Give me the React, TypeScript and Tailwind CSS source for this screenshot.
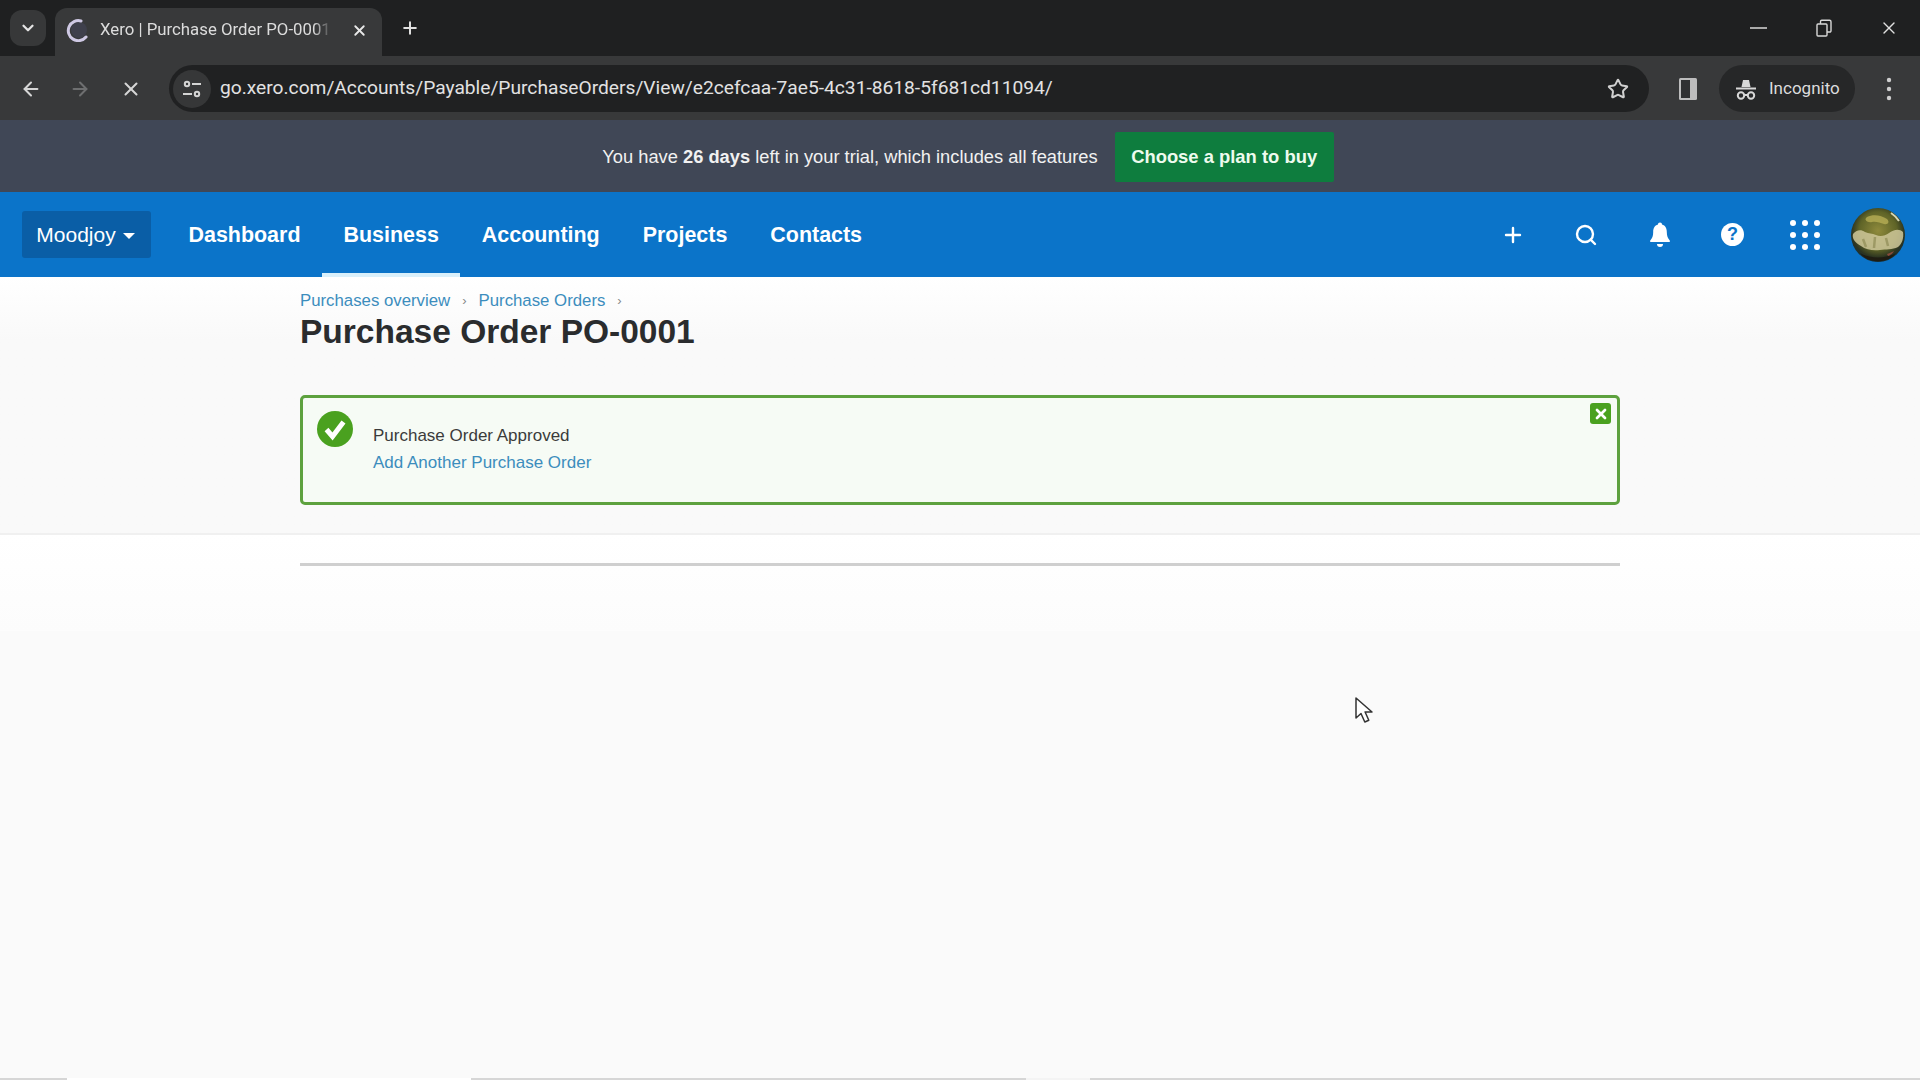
import { ArrowLeft, ArrowRight, ChevronDown, Plus, Search, Star, X } from 'lucide-react';

const navItems = ['Dashboard', 'Business', 'Accounting', 'Projects', 'Contacts'];

const sans = 'font-["Liberation_Sans",Arial,sans-serif]';

function TuneIcon() {
  return (
    <svg width="22" height="22" viewBox="0 0 22 22" fill="none" stroke="#d4d4d4" strokeWidth="2">
      <circle cx="6" cy="6" r="2.2" />
      <path d="M11 6h9M2 16h9" />
      <circle cx="16" cy="16" r="2.2" />
    </svg>
  );
}

function RestoreIcon() {
  return (
    <svg width="16" height="18" viewBox="0 0 16 18" fill="none" stroke="#d8d8d8" strokeWidth="1.4">
      <rect x="1" y="5" width="10" height="12" rx="1" />
      <path d="M4.5 5V2.5a1.2 1.2 0 0 1 1.2-1.2h7.8A1.5 1.5 0 0 1 15 2.8v9a1.2 1.2 0 0 1-1.2 1.2H11" />
    </svg>
  );
}

function SidePanelIcon() {
  return (
    <svg width="20" height="24" viewBox="0 0 20 24">
      <rect x="1" y="1" width="18" height="22" rx="1.5" fill="#bdbdbd" />
      <rect x="3" y="3" width="9" height="18" fill="#303132" />
    </svg>
  );
}

function IncognitoIcon() {
  return (
    <svg width="22" height="24" viewBox="0 0 22 24" fill="none" stroke="#d8d8d8" strokeWidth="2">
      <path d="M6.5 10 8 3h6l1.5 7" fill="#d8d8d8" stroke="none" />
      <path d="M1 11.5h20" />
      <circle cx="6" cy="18.5" r="3.2" />
      <circle cx="16" cy="18.5" r="3.2" />
      <path d="M9 18h4" />
    </svg>
  );
}

function BellIcon() {
  return (
    <svg width="20" height="26" viewBox="0 0 20 26" fill="#fff">
      <path d="M10 0.5c1.3 0 2 .9 2 2.1 3.4 1 4.8 3.9 4.8 7.4 0 3.900 1 6.300 3 8.500v1.500H.2V18.500c2-2.200 3-4.600 3-8.500 0-3.500 1.400-6.400 4.800-7.400 0-1.200.7-2.100 2-2.100z" />
      <path d="M7 22h6a3 3 0 0 1-6 0z" />
    </svg>
  );
}

function GridIcon() {
  return (
    <svg width="30" height="30" viewBox="0 0 30 30" fill="#fff">
      {[3, 15, 27].map(y =>
        [3, 15, 27].map(x => <circle key={`${x}-${y}`} cx={x} cy={y} r="3" />)
      )}
    </svg>
  );
}

function Avatar() {
  return (
    <svg width="54" height="54" viewBox="0 0 54 54" className="shrink-0">
      <defs>
        <radialGradient id="globe" cx="50%" cy="42%" r="58%">
          <stop offset="0%" stopColor="#8f8a3c" />
          <stop offset="60%" stopColor="#5f6427" />
          <stop offset="85%" stopColor="#2c3420" />
          <stop offset="100%" stopColor="#16303a" />
        </radialGradient>
      </defs>
      <circle cx="27" cy="27" r="27" fill="url(#globe)" />
      <path d="M2 26c3-4 8-5 12-2 4 2 7 1 11 3s9 1 13-2 10-5 14-1c1 6-1 12-5 15-6 3-12 2-18 3s-14 0-19-4C3 34 1 30 2 26z" fill="#cfc89a" opacity=".85" />
      <path d="M12 31l3 8M24 29l-1 11M35 30l2 8" stroke="#8f8b55" strokeWidth="2.5" fill="none" opacity=".7" />
      <path d="M16 9c6-3 14-2 20 2 3 3 1 6-3 5s-8-3-12-2-9-2-5-5z" fill="#b6ae55" opacity=".8" />
      <path d="M9 45c10 6 26 6 36 0-8 11-28 11-36 0z" fill="#1f1c12" />
      <path d="M36 46c3-1 5-2 7-3-1 2-3 4-6 5z" fill="#8a4a3a" />
      <path d="M40 5a27 27 0 0 1 8 8" stroke="#d5d6b4" strokeWidth="2" fill="none" />
    </svg>
  );
}

function Cursor() {
  return (
    <svg width="18" height="28" viewBox="0 0 18 28" className="absolute left-[1355px] top-[697px]">
      <path d="M1 1v20l5-4.500 3.800 8.500 4-1.800-3.700-8.200H17z" fill="#fff" stroke="#333" strokeWidth="1.500" strokeLinejoin="round" />
    </svg>
  );
}

export default function App() {
  return (
    <div className={`relative flex h-[1080px] w-[1920px] flex-col overflow-hidden bg-[#fafafa] ${sans}`}>
      {/* Browser tab strip */}
      <div className="flex h-[56px] shrink-0 items-end bg-[#1f2021] font-['Roboto',sans-serif]">
        <div className="mb-[10px] ml-[10px] flex h-[36px] w-[36px] items-center justify-center rounded-xl bg-[#373839]">
          <ChevronDown className="h-[18px] w-[18px] text-[#e4e4e4]" strokeWidth={3} />
        </div>
        <div className="ml-[9px] flex h-[48px] w-[327px] items-center rounded-t-xl bg-[#38393a] pb-[4px] pl-[11px] pr-[14px]">
          <svg width="24" height="24" viewBox="0 0 24 24" fill="none" className="shrink-0">
            <circle cx="13" cy="12" r="8" fill="#3f404c" />
            <path d="M15 3a10 10 0 1 0 5 16" stroke="#cfc9e4" strokeWidth="3" strokeLinecap="round" />
          </svg>
          <span className="ml-[10px] w-[232px] overflow-hidden whitespace-nowrap text-[16.8px] text-[#dcdcdc] [mask-image:linear-gradient(to_right,black_92%,transparent)]">Xero | Purchase Order PO-0001</span>
          <X className="ml-auto h-[17px] w-[17px] text-[#e8e8e8]" strokeWidth={2.6} />
        </div>
        <Plus className="mb-[18px] ml-[18px] h-[20px] w-[20px] text-[#e0e0e0]" strokeWidth={2.4} />
        <div className="mb-[18px] ml-auto flex items-center gap-[47px] pr-[21px]">
          <svg width="17" height="2" viewBox="0 0 17 2" className="mr-[2px]"><path d="M0 1h17" stroke="#cfcfcf" strokeWidth="1.6" /></svg>
          <RestoreIcon />
          <X className="h-[20px] w-[20px] text-[#e0e0e0]" strokeWidth={1.6} />
        </div>
      </div>

      {/* Browser toolbar */}
      <div className="flex h-[64px] shrink-0 items-center bg-[#38393a] pt-[1px] font-['Roboto',sans-serif]">
        <ArrowLeft className="ml-[20px] h-[22px] w-[22px] text-[#d6d6d6]" strokeWidth={2.2} />
        <ArrowRight className="ml-[27px] h-[22px] w-[22px] text-[#6e6f70]" strokeWidth={2.2} />
        <X className="ml-[29px] h-[22px] w-[22px] text-[#d6d6d6]" strokeWidth={2.2} />
        <div className="ml-[27px] flex h-[47px] w-[1480px] items-center rounded-full bg-[#202122]">
          <div className="ml-[4px] flex h-[38px] w-[38px] items-center justify-center rounded-full bg-[#363738]">
            <TuneIcon />
          </div>
          <span className="ml-[9px] whitespace-nowrap text-[19.2px] text-[#e2e2e2]">go.xero.com/Accounts/Payable/PurchaseOrders/View/e2cefcaa-7ae5-4c31-8618-5f681cd11094/</span>
          <Star className="ml-auto mr-[20px] h-[22px] w-[22px] text-[#d0d0d0]" strokeWidth={2.2} />
        </div>
        <div className="ml-[29px]"><SidePanelIcon /></div>
        <div className="ml-[21px] flex h-[47px] w-[136px] items-center rounded-full bg-[#262728] pl-[16px]">
          <IncognitoIcon />
          <span className="ml-[12px] text-[17px] text-[#dcdcdc]">Incognito</span>
        </div>
        <svg width="6" height="24" viewBox="0 0 6 24" fill="#cfcfcf" className="ml-[31px]">
          <circle cx="3" cy="3" r="2.2" />
          <circle cx="3" cy="12" r="2.2" />
          <circle cx="3" cy="21" r="2.2" />
        </svg>
      </div>

      {/* Trial banner */}
      <div className="flex h-[72px] shrink-0 items-center justify-center bg-[#404756] pl-[16px] pt-[2px] text-[#f1f1f1]">
        <span className="text-[18.3px]">You have <b>26 days</b> left in your trial, which includes all features</span>
        <div className="ml-[17px] flex h-[50px] w-[219px] items-center justify-center rounded-[2px] bg-[#0e7d3e] text-[18.4px] font-bold text-[#eefbee]">Choose a plan to buy</div>
      </div>

      {/* Xero nav */}
      <div className="flex h-[85px] shrink-0 items-center bg-[#0b74c9] pl-[22px] pr-[15px] text-white">
        <div className="flex h-[47px] w-[129px] items-center justify-center gap-[7px] rounded-[3px] bg-[#0a5ea6] pr-[2px] text-[21px]">
          Moodjoy
          <span className="mt-[2px] h-0 w-0 border-x-[6px] border-t-[6px] border-x-transparent border-t-white" />
        </div>
        <div className="ml-[16px] flex h-full items-stretch">
          {navItems.map(item => (
            <div
              key={item}
              className={`flex items-center border-b-[4px] px-[21.5px] pt-[5px] text-[21.45px] font-bold ${item === 'Business' ? 'border-[#d9f0fb]' : 'border-transparent'}`}
            >
              {item}
            </div>
          ))}
        </div>
        <div className="ml-auto flex items-center">
          <Plus className="h-[24px] w-[24px]" strokeWidth={2.4} />
          <Search className="ml-[49px] h-[24px] w-[24px]" strokeWidth={2.4} />
          <div className="ml-[52px]"><BellIcon /></div>
          <div className="ml-[51px] flex h-[23px] w-[23px] items-center justify-center rounded-full bg-white text-[18px] font-bold text-[#0b74c9]">?</div>
          <div className="ml-[46px]"><GridIcon /></div>
          <div className="ml-[31px]"><Avatar /></div>
        </div>
      </div>

      {/* Page */}
      <main className="flex-1">
        <div className="border-b-2 border-[#f0f0f0] bg-gradient-to-b from-white to-[#f9f9f9] to-[25%] pb-[28px] pl-[300px] pr-[300px] pt-[12px]">
          <div className="flex items-center text-[16.8px] leading-[24px] text-[#3c8dbd]">
            Purchases overview
            <span className="mx-[12px] text-[13px] text-[#888]">›</span>
            Purchase Orders
            <span className="mx-[12px] text-[13px] text-[#888]">›</span>
          </div>
          <h1 className="text-[33.5px] font-bold leading-[38px] text-[#2a2c2e]">Purchase Order PO-0001</h1>
          <div className="relative mt-[44px] flex h-[110px] rounded-[5px] border-[3px] border-[#5da13e] bg-[#f6fbf5] pl-[14px] pt-[13px]">
            <svg width="36" height="36" viewBox="0 0 36 36" className="shrink-0">
              <circle cx="18" cy="18" r="18" fill="#4aa11f" />
              <path d="M9.500 18.500l6 7L26.500 11" fill="none" stroke="#fff" strokeWidth="5" />
            </svg>
            <div className="ml-[20px] pt-[11px] text-[17px] leading-[27px]">
              <div className="text-[#3b3b3b]">Purchase Order Approved</div>
              <div className="text-[#3c8dbd]">Add Another Purchase Order</div>
            </div>
            <div className="absolute right-[6px] top-[5px] flex h-[21px] w-[21px] items-center justify-center rounded-[3px] bg-[#4aa11f]">
              <X className="h-[16px] w-[16px] text-white" strokeWidth={4} />
            </div>
          </div>
        </div>
        <div className="bg-gradient-to-b from-white to-[#fcfcfc] px-[300px] pb-[65px] pt-[28px]">
          <div className="h-[3px] bg-[#cfcfcf]" />
        </div>
      </main>

      {/* Bottom edge */}
      <div className="flex h-[2px] shrink-0 bg-[#d6d6d6]">
        <div className="ml-[67px] w-[404px] bg-white" />
        <div className="ml-[555px] w-[64px] bg-[#f4f4f4]" />
      </div>

      <Cursor />
    </div>
  );
}
